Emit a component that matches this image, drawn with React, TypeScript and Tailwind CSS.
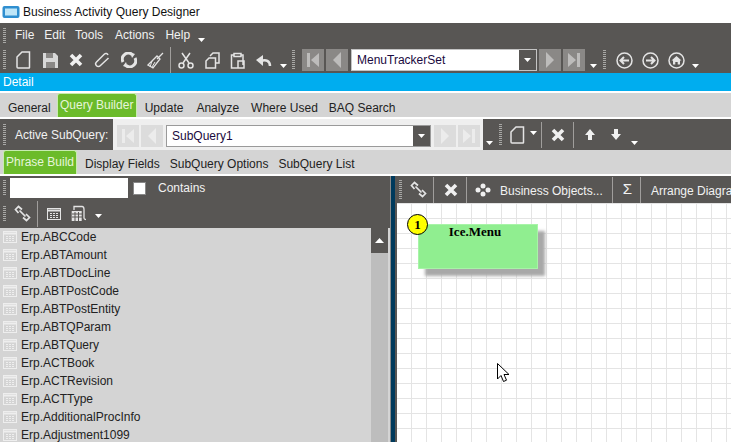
import type { ReactNode } from 'react';

const tables = [
  'Erp.ABCCode',
  'Erp.ABTAmount',
  'Erp.ABTDocLine',
  'Erp.ABTPostCode',
  'Erp.ABTPostEntity',
  'Erp.ABTQParam',
  'Erp.ABTQuery',
  'Erp.ACTBook',
  'Erp.ACTRevision',
  'Erp.ACTType',
  'Erp.AdditionalProcInfo',
  'Erp.Adjustment1099',
];

function Grip({ h = 'h-[20px]', ml = 'ml-[3px]' }: { h?: string; ml?: string }) {
  return (
    <div
      className={`w-[3px] shrink-0 ${h} ${ml} bg-[repeating-linear-gradient(#a8a8a6_0px,#a8a8a6_1px,transparent_1px,transparent_2px)]`}
    ></div>
  );
}

function Sep({ ml }: { ml: string }) {
  return <div className={`w-px h-[26px] shrink-0 bg-[#a09e9c] ${ml}`}></div>;
}

function Chevron({ ml }: { ml: string }) {
  return (
    <svg width="7" height="5" viewBox="0 0 7 5" className={`shrink-0 self-end mb-[4px] ${ml}`}>
      <path d="M0 0h7L3.500 4z" fill="#fff" />
    </svg>
  );
}

function Ico({ w = 18, h = 18, ml, children }: { w?: number; h?: number; ml: string; children: ReactNode }) {
  return (
    <svg
      width={w}
      height={h}
      viewBox={`0 0 ${w} ${h}`}
      fill="none"
      stroke="#e4e4e4"
      strokeWidth="1.500"
      className={`shrink-0 ${ml}`}
    >
      {children}
    </svg>
  );
}

const NewDoc = ({ ml }: { ml: string }) => (
  <Ico w={15} h={18} ml={ml}>
    <path d="M1 6 6 1h7.500v15.500q0 .5-.5.5H2q-1 0-1-1z" />
  </Ico>
);

const Cross = ({ ml, s = 14 }: { ml: string; s?: number }) => (
  <svg width={s} height={s} viewBox="0 0 14 14" className={`shrink-0 ${ml}`}>
    <path d="M2 2l10 10M12 2 2 12" stroke="#f0f0f0" strokeWidth="3.600" />
  </svg>
);

const LinkIcon = ({ ml }: { ml: string }) => (
  <Ico w={17} h={17} ml={ml}>
    <path d="M4.500 8 1.500 4.500 4.500 1.500 8 4.500" strokeWidth="1.700" />
    <path d="M9 12.500l3.500 3 3-3-3.500-3.500" strokeWidth="1.700" />
    <path d="M5.500 5.500l6 6" strokeWidth="1.700" />
  </Ico>
);

function NavBtn({ dir, last, light, ml }: { dir: 'l' | 'r'; last?: boolean; light?: boolean; ml: string }) {
  const bg = light ? 'bg-[#dcdcdc]' : 'bg-[#8a8886]';
  const fg = light ? '#ececec' : '#bdbcbb';
  return (
    <div className={`w-[22px] h-[22px] shrink-0 flex items-center justify-center ${bg} ${ml}`}>
      <svg width="14" height="16" viewBox="0 0 14 16">
        {dir === 'l' ? (
          <path d={last ? 'M1 1h3v14H1zM13 1v14L5 8z' : 'M11 0v16L3 8z'} fill={fg} />
        ) : (
          <path d={last ? 'M13 1h-3v14h3zM1 1v14l8-7z' : 'M3 0v16l8-8z'} fill={fg} />
        )}
      </svg>
    </div>
  );
}

function Combo({ value, w, border }: { value: string; w: string; border: string }) {
  return (
    <div className={`h-[22px] ml-[3px] flex shrink-0 bg-white border ${border} ${w}`}>
      <div className="flex-1 pl-[5px] leading-[20px] text-[#1a0a40]">{value}</div>
      <div className="w-[17px] bg-[#585654] flex items-center justify-center">
        <svg width="7" height="4" viewBox="0 0 7 4">
          <path d="M0 0h7L3.500 4z" fill="#fff" />
        </svg>
      </div>
    </div>
  );
}

const CircleIcon = ({ ml, children }: { ml: string; children: ReactNode }) => (
  <Ico w={17} h={17} ml={ml}>
    <circle cx="8.500" cy="8.500" r="7.500" />
    {children}
  </Ico>
);

function TableGlyph({ stroke = '#e4e4e4', ml = '' }: { stroke?: string; ml?: string }) {
  return (
    <svg width="14" height="12" viewBox="0 0 14 12" fill="none" className={`shrink-0 ${ml}`}>
      <rect x="0.500" y="0.500" width="13" height="11" stroke={stroke} />
      <path d="M1 2.500h12" stroke={stroke} strokeWidth="2" />
      <path d="M3 5.500h8M3 7.500h8M3 9.500h8" stroke={stroke} strokeDasharray="2 1" />
    </svg>
  );
}

export default function App() {
  return (
    <div className="relative w-[731px] h-[442px] overflow-hidden bg-white [font-family:Liberation_Sans,sans-serif] text-[12px] whitespace-nowrap text-[#222]">
      {/* title bar */}
      <div className="h-[23px] flex items-center">
        <svg width="18" height="14" viewBox="0 0 18 14" className="ml-[2px]">
          <rect x="0.500" y="1" width="17" height="12" rx="2" fill="#2f8fd0" />
          <rect x="3" y="3.500" width="12" height="7" fill="#bfe6f8" />
        </svg>
        <span className="ml-[3px] text-[#111]">Business Activity Query Designer</span>
      </div>

      {/* menu */}
      <div className="h-[24px] bg-[#585654] flex items-center text-[#f2f2f2]">
        <Grip h="h-[15px]" ml="ml-[3px]" />
        <span className="ml-[9px]">File</span>
        <span className="ml-[10px]">Edit</span>
        <span className="ml-[10px]">Tools</span>
        <span className="ml-[12px]">Actions</span>
        <span className="ml-[11px]">Help</span>
        <Chevron ml="ml-[8px]" />
      </div>

      {/* main toolbar */}
      <div className="h-[26px] bg-[#585654] flex items-center">
        <Grip h="h-[20px]" ml="ml-[3px]" />
        <NewDoc ml="ml-[10px]" />
        <Ico w={17} h={17} ml="ml-[11px]">
          <path d="M1 1h12l3 3v12H1z" fill="#d8d8d8" stroke="none" />
          <path d="M4 1h7v5H4zM4 10h9v6H4z" fill="#8a8886" stroke="none" />
        </Ico>
        <Cross ml="ml-[10px]" />
        <Ico w={17} h={17} ml="ml-[11px]">
          <path d="M14 3a2.200 2.200 0 0 0-3.500-1L2.500 10a2.600 2.600 0 0 0 3.700 3.700L14.500 6" />
        </Ico>
        <Ico w={16} h={16} ml="ml-[10px]">
          <path d="M2 10A6 6 0 0 1 11 2.500M14 6a6 6 0 0 1-9 7.500" strokeWidth="3" />
          <path d="M9 0l5 2-3 4zM7 16l-5-2 3-4z" fill="#e4e4e4" stroke="none" />
        </Ico>
        <Ico w={17} h={17} ml="ml-[10px]">
          <path d="M16 1l-6 6M10 4l3 3-7 9-5-3z" strokeWidth="1.300" />
          <path d="M5 9l-2 6M8 10l-3 5" strokeWidth="1" />
        </Ico>
        <Sep ml="ml-[6px]" />
        <Ico w={16} h={17} ml="ml-[7px]">
          <circle cx="3.500" cy="13.500" r="2.500" />
          <circle cx="12.500" cy="13.500" r="2.500" />
          <path d="M5 11 12 1M11 11 4 1" />
        </Ico>
        <Ico w={15} h={17} ml="ml-[11px]">
          <path d="M5 4 8 1h6v10h-3M1 9l3-3h6.500v10H1z" />
        </Ico>
        <Ico w={15} h={17} ml="ml-[10px]">
          <path d="M11 3h2v10M4 3H1.500v13H8M4 1.500h7v3H4zM8 9h6v7H8z" />
        </Ico>
        <svg width="17" height="13" viewBox="0 0 17 13" className="ml-[10px] shrink-0">
          <path d="M15 12c0-5-4-7-9-5" stroke="#e4e4e4" strokeWidth="2.500" fill="none" />
          <path d="M8 1v11L1 6z" fill="#e4e4e4" />
        </svg>
        <Chevron ml="ml-[8px]" />
        <Grip h="h-[20px]" ml="ml-[5px]" />
        <NavBtn dir="l" last ml="ml-[7px]" />
        <NavBtn dir="l" ml="ml-[2px]" />
        <Combo value="MenuTrackerSet" w="w-[186px]" border="border-[#c4c4c4]" />
        <NavBtn dir="r" ml="ml-[2px]" />
        <NavBtn dir="r" last ml="ml-[2px]" />
        <Chevron ml="ml-[5px]" />
        <Grip h="h-[20px]" ml="ml-[6px]" />
        <CircleIcon ml="ml-[10px]">
          <path d="M13 8.500H4.500M8 5 4.500 8.500 8 12" strokeWidth="2" />
        </CircleIcon>
        <CircleIcon ml="ml-[9px]">
          <path d="M4 8.500h8.500M9 5l3.500 3.500L9 12" strokeWidth="2" />
        </CircleIcon>
        <CircleIcon ml="ml-[9px]">
          <path d="M3.500 8.500l5-4.500 5 4.500H12v4H9.700V10H7.300v2.500H5v-4z" fill="#e4e4e4" stroke="none" />
        </CircleIcon>
        <Chevron ml="ml-[7px]" />
      </div>

      {/* detail strip */}
      <div className="h-[18px] bg-[#00adef] text-white leading-[18px] pl-[3px]">Detail</div>

      {/* top tabs */}
      <div className="mt-[2px] mb-[2px] h-[24px] bg-[#d4d4d4] flex items-end text-[#222]">
        <span className="ml-[8px]">General</span>
        <div className="ml-[6px] w-[80px] h-[24px] bg-[#6bbb2a] border border-[#c8ecb0] border-b-0 rounded-t-[3px] text-[#e6f5da] text-center leading-[23px]">
          Query Builder
        </div>
        <span className="ml-[8px]">Update</span>
        <span className="ml-[13px]">Analyze</span>
        <span className="ml-[12px]">Where Used</span>
        <span className="ml-[11px]">BAQ Search</span>
      </div>

      {/* active subquery */}
      <div className="h-[31px] bg-[#585654] flex items-center">
        <Grip h="h-[22px]" ml="ml-[3px]" />
        <span className="ml-[9px] w-[98px] text-[#f2f2f2]">Active SubQuery:</span>
        <div className="w-[370px] h-[31px] pt-[2px] bg-[#efefef] flex items-center shrink-0">
          <NavBtn dir="l" last light ml="ml-[4px]" />
          <NavBtn dir="l" light ml="ml-[2px]" />
          <Combo value="SubQuery1" w="w-[265px]" border="border-[#9a9a9a]" />
          <NavBtn dir="r" light ml="ml-[3px]" />
          <NavBtn dir="r" last light ml="ml-[2px]" />
        </div>
        <Chevron ml="ml-[3px]" />
        <Grip h="h-[22px]" ml="ml-[6px]" />
        <NewDoc ml="ml-[8px]" />
        <Chevron ml="ml-[5px] !self-center !mb-[2px]" />
        <Sep ml="ml-[4px]" />
        <Cross ml="ml-[9px]" />
        <Sep ml="ml-[8px]" />
        <svg width="10" height="11" viewBox="0 0 10 11" className="ml-[11px] shrink-0">
          <path d="M5 0l5 6H7v5H3V6H0z" fill="#f0f0f0" />
        </svg>
        <svg width="10" height="11" viewBox="0 0 10 11" className="ml-[16px] shrink-0">
          <path d="M5 11l5-6H7V0H3v5H0z" fill="#f0f0f0" />
        </svg>
        <Chevron ml="ml-[10px]" />
      </div>

      {/* sub tabs */}
      <div className="h-[24px] bg-[#d4d4d4] flex items-end text-[#222]">
        <div className="ml-[3px] w-[74px] h-[24px] bg-[#6bbb2a] border border-[#c8ecb0] border-b-0 rounded-t-[3px] text-[#e6f5da] text-center leading-[22px]">
          Phrase Build
        </div>
        <span className="ml-[8px] mb-[1px]">Display Fields</span>
        <span className="ml-[10px] mb-[1px]">SubQuery Options</span>
        <span className="ml-[10px] mb-[1px]">SubQuery List</span>
      </div>

      {/* split */}
      <div className="mt-[2px] flex h-[266px]">
        <div className="w-[390px] shrink-0 flex flex-col">
          <div className="h-[28px] pb-[4px] bg-[#585654] flex items-center text-[#f2f2f2]">
            <Grip h="h-[16px]" ml="ml-[3px]" />
            <div className="ml-[4px] w-[118px] h-[20px] bg-white"></div>
            <div className="ml-[5px] w-[13px] h-[13px] bg-white border border-[#888]"></div>
            <span className="ml-[12px]">Contains</span>
          </div>
          <div className="h-[24px] pb-[5px] bg-[#585654] flex items-center">
            <Grip h="h-[16px]" ml="ml-[3px]" />
            <LinkIcon ml="ml-[8px]" />
            <Sep ml="ml-[6px]" />
            <TableGlyph ml="ml-[9px]" />
            <Ico w={16} h={17} ml="ml-[10px]">
              <path d="M3 5V1.500h8c1.500 0 2 1 2 3V13c0 1 1 1.500 2 1.500" strokeWidth="1.300" />
              <rect x="0.700" y="6" width="10" height="10" fill="#e4e4e4" stroke="none" />
              <path d="M1 9h10M1 12h10M4 7v9M7.500 7v9" stroke="#585654" strokeWidth="1" />
            </Ico>
            <Chevron ml="ml-[8px]" />
          </div>
          <div className="flex-1 flex bg-[#d4d4d4] overflow-hidden">
            <div className="w-[371px] shrink-0">
              {tables.map((t) => (
                <div key={t} className="h-[18px] flex items-center">
                  <TableGlyph stroke="#eeeeee" ml="ml-[3px]" />
                  <span className="ml-[4px] text-[#222]">{t}</span>
                </div>
              ))}
            </div>
            <div className="w-[17px] bg-[#bdbdbd] shrink-0">
              <div className="h-[25px] bg-[#585654] flex items-center justify-center">
                <svg width="9" height="5" viewBox="0 0 9 5">
                  <path d="M0 5h9L4.500 0z" fill="#fff" />
                </svg>
              </div>
            </div>
          </div>
        </div>

        {/* divider */}
        <div className="w-[7px] shrink-0 flex">
          <div className="w-[1px] bg-[#8a8a8a]"></div>
          <div className="w-[4px] bg-[#003a5c]"></div>
          <div className="w-[2px] bg-[#585654]"></div>
        </div>

        <div className="flex-1 flex flex-col min-w-0">
          <div className="h-[27px] bg-[#585654] flex items-center text-[#f2f2f2] overflow-hidden">
            <Grip h="h-[20px]" ml="ml-[2px]" />
            <LinkIcon ml="ml-[8px]" />
            <Sep ml="ml-[6px]" />
            <Cross ml="ml-[10px]" />
            <Sep ml="ml-[8px]" />
            <svg width="16" height="14" viewBox="0 0 16 14" className="ml-[8px] shrink-0" fill="#f0f0f0">
              <circle cx="8" cy="3" r="2.500" />
              <circle cx="3" cy="7" r="2.500" />
              <circle cx="13" cy="7" r="2.500" />
              <circle cx="8" cy="11" r="2.500" />
            </svg>
            <span className="ml-[9px] pt-[2px]">Business Objects...</span>
            <Sep ml="ml-[9px]" />
            <span className="ml-[10px] text-[15px]">Σ</span>
            <Sep ml="ml-[8px]" />
            <span className="ml-[10px] pt-[2px]">Arrange Diagram</span>
          </div>
          <div className="flex-1 bg-white bg-[linear-gradient(#e4e4e4_1px,transparent_1px),linear-gradient(90deg,#e4e4e4_1px,transparent_1px)] bg-[size:15px_15px] bg-[position:14px_0px]"></div>
        </div>
      </div>

      {/* diagram node */}
      <div className="absolute left-[418px] top-[224px] w-[120px] h-[45px] pr-[6px] bg-[#90ee90] border border-[#a8f4a8] shadow-[7px_7px_3px_#a8a8a8] text-center [font-family:Liberation_Serif,serif] font-bold text-[13px] leading-[14px] text-black">
        Ice.Menu
      </div>
      <div className="absolute left-[407px] top-[214px] w-[21px] h-[21px] rounded-full bg-[#ffff00] border border-black text-center [font-family:Liberation_Serif,serif] font-bold text-[13px] leading-[19px] text-black">
        1
      </div>

      {/* mouse cursor */}
      <svg width="14" height="22" viewBox="0 0 14 22" className="absolute left-[497px] top-[363px]">
        <path d="M.5.500v15.500l3.500-3.500 2.500 6 3-1.300-2.500-5.700h5z" fill="#fff" stroke="#000" />
      </svg>
    </div>
  );
}
